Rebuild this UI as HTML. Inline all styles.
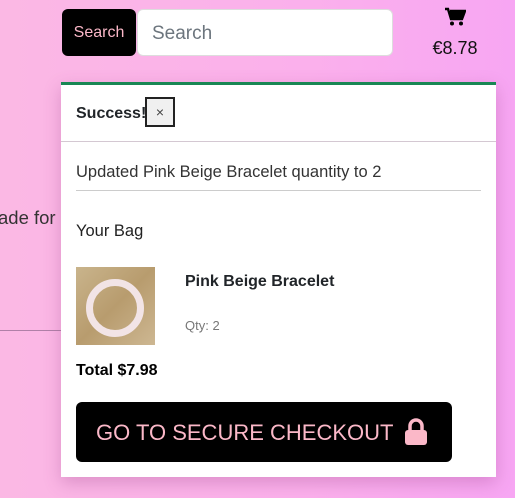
<!DOCTYPE html>
<html><head><style>
*{margin:0;padding:0;box-sizing:border-box}
body{width:515px;height:498px;overflow:hidden;position:relative;font-family:"Liberation Sans",sans-serif;background:linear-gradient(90deg,#fbb8e4 0%,#fbb0ec 60%,#f7a6f3 100%);color:#212529}
.abs{position:absolute}
</style></head><body>
<div class="abs" style="left:62px;top:9px;width:74px;height:47px;background:#000;border-radius:6px;color:#fbb8c8;font-size:16px;line-height:47px;text-align:center">Search</div>
<div class="abs" style="left:137px;top:9px;width:256px;height:47px;background:#fff;border:1px solid #ddd;border-radius:6px;color:#6c757d;font-size:19px;line-height:47px;padding-left:14px">Search</div>
<svg class="abs" style="left:444px;top:7px" width="22" height="20" viewBox="0 0 22 20"><path d="M1 2h3l3 10h11l3-8H6" fill="none" stroke="#000" stroke-width="2.4"/><path d="M5 4h16l-3 8H7z" fill="#000"/><circle cx="8" cy="16.5" r="2" fill="#000"/><circle cx="17" cy="16.5" r="2" fill="#000"/></svg>
<div class="abs" style="left:422px;top:38px;width:66px;text-align:center;font-size:18px;color:#111">€8.78</div>
<div class="abs" style="left:-2px;top:207px;font-size:18.5px;color:#333">ade for</div>
<div class="abs" style="left:0;top:330px;width:62px;height:1px;background:#b080a8"></div>
<div class="abs" style="left:61px;top:82px;width:435px;height:395px;background:#fff;border-top:3px solid #198754;box-shadow:0 6px 16px rgba(150,60,130,.3)">
 <div style="height:57px;border-bottom:1px solid #d4c8d2;position:relative">
  <div class="abs" style="left:15px;top:20px;font-weight:bold;font-size:16px">Success!</div>
  <div class="abs" style="left:84px;top:12px;width:30px;height:30px;border:2px solid #222;background:#f0f0f0;text-align:center;line-height:26px;font-size:14px;color:#444">×</div>
 </div>
 <div class="abs" style="left:15px;top:78px;font-size:16.5px;color:#333">Updated Pink Beige Bracelet quantity to 2</div>
 <div class="abs" style="left:15px;top:105px;width:405px;height:1px;background:#ccc"></div>
 <div class="abs" style="left:15px;top:137px;font-size:16.5px;color:#222">Your Bag</div>
 <div class="abs" style="left:15px;top:182px;width:79px;height:78px;background:linear-gradient(135deg,#c9b48c,#b89c6e 50%,#cdb792)">
  <div style="position:absolute;left:10px;top:12px;width:58px;height:58px;border:7px solid #f2e4e6;border-radius:50%"></div>
 </div>
 <div class="abs" style="left:124px;top:188px;font-weight:bold;font-size:16px">Pink Beige Bracelet</div>
 <div class="abs" style="left:124px;top:233px;font-size:13px;color:#777">Qty: 2</div>
 <div class="abs" style="left:15px;top:277px;font-weight:bold;font-size:16px;color:#000">Total $7.98</div>
 <div class="abs" style="left:15px;top:317px;width:376px;height:60px;background:#000;border-radius:6px;color:#fbb8c8;font-size:22px;line-height:62px;padding-left:20px">GO TO SECURE CHECKOUT
  <svg style="position:absolute;left:328px;top:16px" width="24" height="28" viewBox="0 0 24 28"><path d="M6 12V8a6 6 0 0 1 12 0v4" fill="none" stroke="#fbb8c8" stroke-width="3.5"/><rect x="1" y="12" width="22" height="15" rx="3" fill="#fbb8c8"/></svg>
 </div>
</div>
</body></html>
